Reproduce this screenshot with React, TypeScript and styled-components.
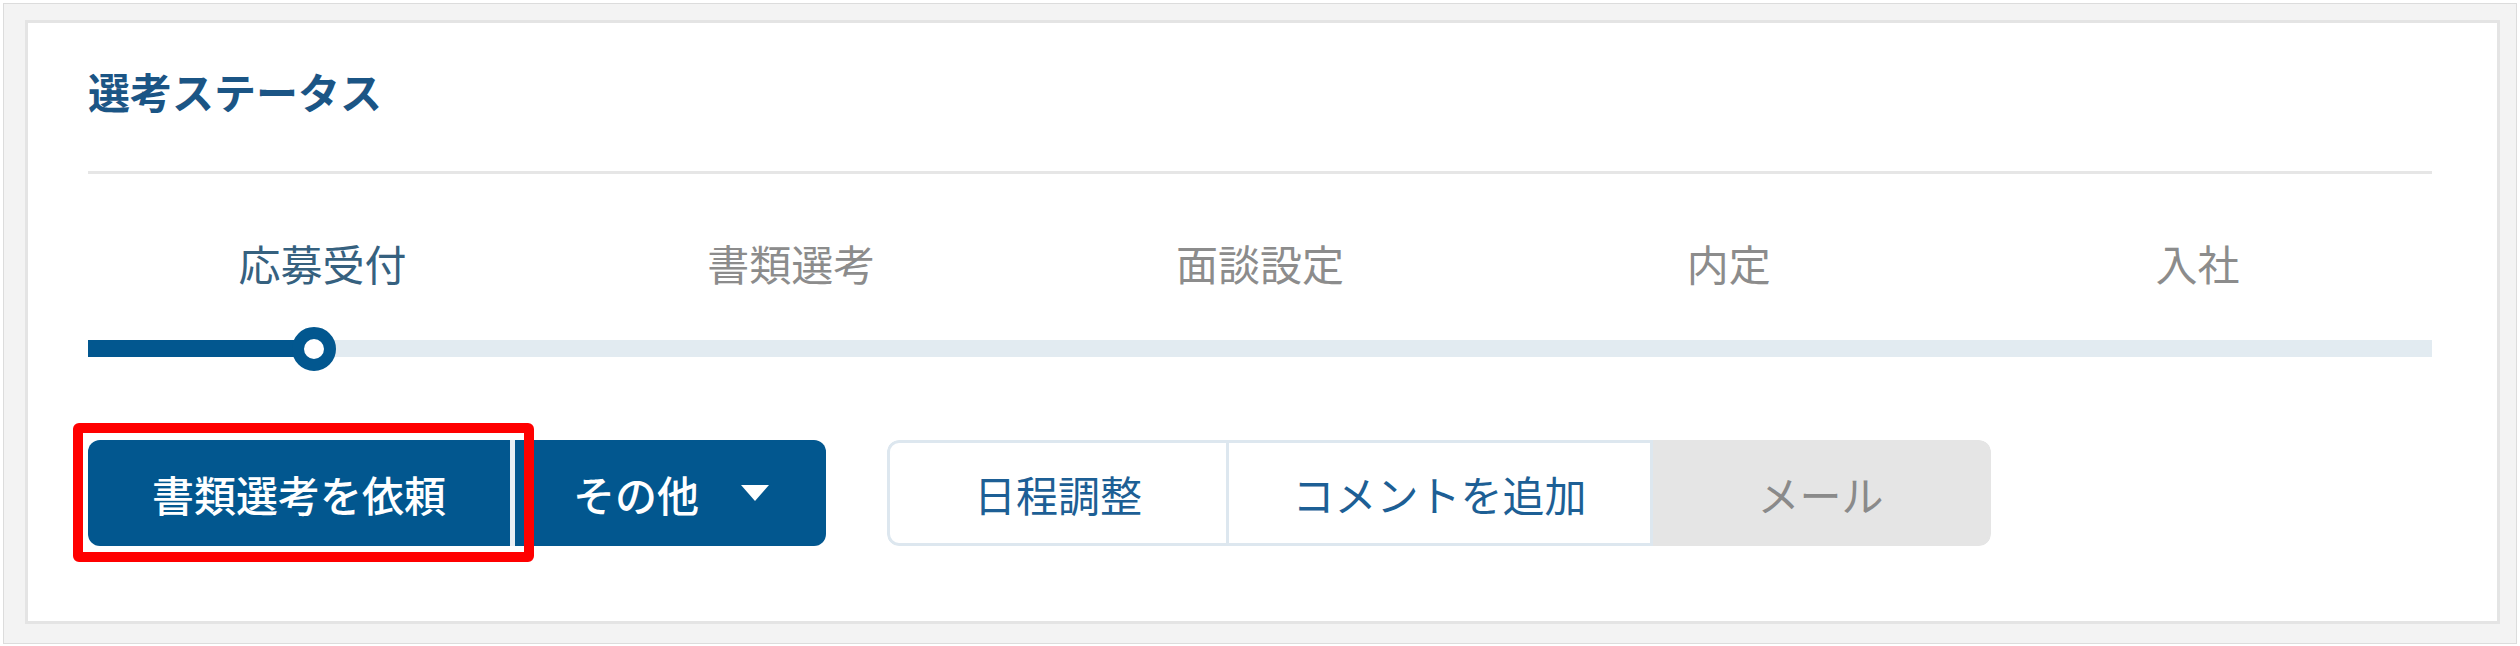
import React from 'react';
import styled, { createGlobalStyle } from 'styled-components';

const GlobalStyle = createGlobalStyle`
    * {
        box-sizing: border-box;
    }
    body {
        margin: 0;
        background: #ffffff;
        font-family: "Noto Sans CJK JP", "Noto Sans", sans-serif;
    }
`;

const Frame = styled.div`
    margin: 3px 3px 0 3px;
    height: 641px;
    border: 1px solid #dcdcdc;
    background: #f3f3f3;
    padding: 16px 16px 19px 21px;
`;

const Card = styled.section`
    height: 100%;
    background: #ffffff;
    border: 3px solid #e4e4e4;
    padding: 47px 65px 0 60px;
    display: flex;
    flex-direction: column;
`;

const Title = styled.h2`
    margin: 0;
    font-size: 42px;
    line-height: 42px;
    font-weight: 700;
    color: #1b5585;
`;

const Divider = styled.hr`
    margin: 59px 0 0 0;
    border: none;
    height: 3px;
    background: #e6e6e6;
`;

const StageRow = styled.div`
    margin-top: 68px;
    display: grid;
    grid-template-columns: repeat(5, 1fr);
`;

const StageLabel = styled.div<{ $active?: boolean }>`
    text-align: center;
    font-size: 42px;
    line-height: 42px;
    font-weight: 400;
    color: ${({ $active }) => ($active ? '#36617f' : '#8c8c8c')};
`;

const Track = styled.div`
    position: relative;
    margin-top: 56px;
    height: 17px;
    background: #e2ebf1;
`;

const TrackFill = styled.div`
    position: absolute;
    left: 0;
    top: 0;
    height: 100%;
    background: #02578f;
`;

const Knob = styled.div`
    position: absolute;
    top: 50%;
    width: 44px;
    height: 44px;
    margin: -22px 0 0 -22px;
    border-radius: 50%;
    border: 12px solid #02578f;
    background: #ffffff;
`;

const ActionRow = styled.div`
    margin-top: 83px;
    display: flex;
    align-items: center;
    gap: 61px;
`;

const PrimaryGroup = styled.div`
    position: relative;
    display: flex;
`;

const Highlight = styled.div`
    position: absolute;
    left: -15px;
    top: -17px;
    width: 461px;
    height: 139px;
    border: 10px solid #ff0000;
    border-radius: 6px;
    pointer-events: none;
`;

const PrimaryButton = styled.button<{ $w: number; $side: 'left' | 'right' }>`
    width: ${({ $w }) => $w}px;
    height: 106px;
    border: none;
    border-left: ${({ $side }) => ($side === 'right' ? '5px solid #e9eff4' : 'none')};
    border-radius: ${({ $side }) => ($side === 'left' ? '12px 0 0 12px' : '0 12px 12px 0')};
    background: #02578f;
    color: #ffffff;
    font-family: inherit;
    font-size: 42px;
    font-weight: 500;
    display: flex;
    align-items: center;
    justify-content: ${({ $side }) => ($side === 'left' ? 'center' : 'flex-start')};
    padding: ${({ $side }) => ($side === 'left' ? '0' : '0 0 0 58px')};
    gap: 42px;
`;

const Caret = styled.svg`
    width: 28px;
    height: 16px;
    flex: none;
`;

const SegGroup = styled.div`
    display: flex;
    border-radius: 12px;
    overflow: hidden;
`;

const SegButton = styled.button<{ $w: number; $disabled?: boolean; $first?: boolean }>`
    width: ${({ $w }) => $w}px;
    height: 106px;
    padding: 0;
    border: 3px solid ${({ $disabled }) => ($disabled ? '#e5e5e5' : '#dde7ef')};
    border-left-width: ${({ $first }) => ($first ? '3px' : '0')};
    border-radius: ${({ $first, $disabled }) =>
        $first ? '12px 0 0 12px' : $disabled ? '0 12px 12px 0' : '0'};
    background: ${({ $disabled }) => ($disabled ? '#e5e5e5' : '#ffffff')};
    color: ${({ $disabled }) => ($disabled ? '#8a8a8a' : '#1d5f95')};
    font-family: inherit;
    font-size: 42px;
    font-weight: 400;
    display: flex;
    align-items: center;
    justify-content: center;
`;

const stages = ['応募受付', '書類選考', '面談設定', '内定', '入社'];
const progress = 9.65;

export default function App() {
    return (
        <>
            <GlobalStyle />
            <Frame>
                <Card>
                    <Title>選考ステータス</Title>
                    <Divider />
                    <StageRow>
                        {stages.map((s, i) => (
                            <StageLabel key={s} $active={i === 0}>{s}</StageLabel>
                        ))}
                    </StageRow>
                    <Track>
                        <TrackFill style={{ width: `${progress}%` }} />
                        <Knob style={{ left: `${progress}%` }} />
                    </Track>
                    <ActionRow>
                        <PrimaryGroup>
                            <PrimaryButton $w={422} $side="left">書類選考を依頼</PrimaryButton>
                            <PrimaryButton $w={316} $side="right">
                                その他
                                <Caret viewBox="0 0 28 16">
                                    <polygon points="0,0 28,0 14,16" fill="#ffffff" />
                                </Caret>
                            </PrimaryButton>
                            <Highlight />
                        </PrimaryGroup>
                        <SegGroup>
                            <SegButton $w={342} $first>日程調整</SegButton>
                            <SegButton $w={424}>コメントを追加</SegButton>
                            <SegButton $w={338} $disabled>メール</SegButton>
                        </SegGroup>
                    </ActionRow>
                </Card>
            </Frame>
        </>
    );
}
